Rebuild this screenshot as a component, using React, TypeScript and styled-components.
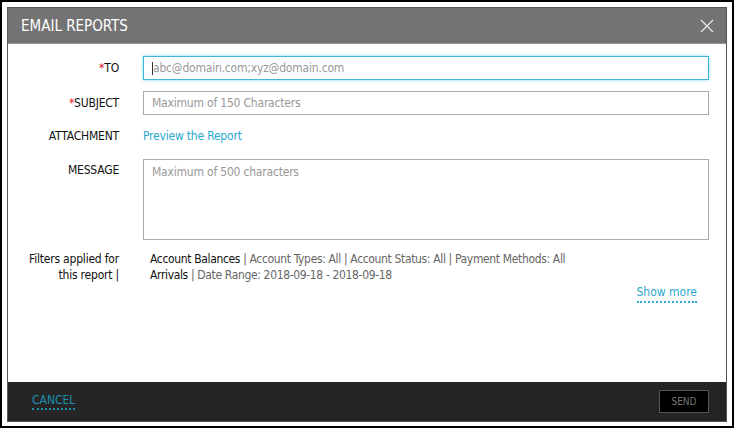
import React from 'react';
import styled, { createGlobalStyle } from 'styled-components';

const Global = createGlobalStyle`
  html, body { margin: 0; padding: 0; background: #fff; }
  body { font-family: "Liberation Sans Narrow", "DejaVu Sans Condensed", "Liberation Sans", sans-serif; }
`;

const Frame = styled.div`
  width: 734px;
  height: 428px;
  box-sizing: border-box;
  border: 2px solid #000;
  padding: 5px 5px 4px 5px;
  background: #fff;
`;

const Dialog = styled.div`
  height: 100%;
  display: flex;
  flex-direction: column;
  border: 1px solid #555;
  box-sizing: border-box;
`;

const Header = styled.div`
  height: 35px;
  background: #737373;
  display: flex;
  align-items: center;
  justify-content: space-between;
  padding: 0 12px 0 13px;
  color: #fff;
  font-size: 15px;
  border-bottom: 1px solid #999;
`;

const Body = styled.div`
  flex: 1;
  padding: 12px 17px 0 0;
  display: flex;
  flex-direction: column;
`;

const Row = styled.div<{ $top?: boolean; $mb: number }>`
  display: grid;
  grid-template-columns: 111px 1fr;
  column-gap: 24px;
  align-items: ${p => (p.$top ? 'start' : 'center')};
  margin-bottom: ${p => p.$mb}px;
`;

const Label = styled.div<{ $pad?: number }>`
  text-align: right;
  font-size: 12px;
  color: #111;
  padding-top: ${p => p.$pad ?? 0}px;
  line-height: 16px;
  letter-spacing: -0.2px;
`;

const Req = styled.span`
  color: #e0202a;
`;

const Input = styled.div<{ $focus?: boolean }>`
  height: 24px;
  box-sizing: border-box;
  border: 1px solid ${p => (p.$focus ? '#3fb6d6' : '#aaa')};
  box-shadow: ${p => (p.$focus ? '0 0 3px #7fd3ea' : 'none')};
  padding: 0 8px;
  display: flex;
  align-items: center;
  font-size: 12px;
  color: #999;
  letter-spacing: -0.2px;
`;

const Caret = styled.span`
  display: inline-block;
  width: 1px;
  height: 13px;
  background: #333;
`;

const TextArea = styled.div`
  height: 81px;
  box-sizing: border-box;
  border: 1px solid #aaa;
  padding: 5px 8px;
  font-size: 12px;
  color: #999;
  letter-spacing: -0.2px;
`;

const Link = styled.span`
  color: #2aa8d0;
  font-size: 12px;
  letter-spacing: -0.2px;
`;

const Filters = styled.div`
  font-size: 12px;
  line-height: 16px;
  color: #666;
  padding-left: 7px;
  letter-spacing: -0.35px;
`;

const Strong = styled.span`
  color: #111;
`;

const MoreRow = styled.div`
  display: flex;
  justify-content: flex-end;
  padding-right: 12px;
  margin-top: 2px;
`;

const Dotted = styled.span`
  color: #2aa8d0;
  font-size: 12px;
  border-bottom: 2px dotted #2aa8d0;
  padding-bottom: 2px;
`;

const Footer = styled.div`
  height: 39px;
  background: #252525;
  display: flex;
  align-items: center;
  justify-content: space-between;
  padding: 0 17px 0 24px;
`;

const Cancel = styled.span`
  color: #1f8fb0;
  font-size: 12px;
  border-bottom: 2px dotted #1f8fb0;
  padding-bottom: 1px;
`;

const Send = styled.div`
  width: 50px;
  height: 23px;
  box-sizing: border-box;
  background: #000;
  border: 1px solid #555;
  color: #777;
  font-size: 10px;
  display: flex;
  align-items: center;
  justify-content: center;
`;

export default function App() {
  return (
    <>
      <Global />
      <Frame>
        <Dialog>
          <Header>
            <span>EMAIL REPORTS</span>
            <svg width="14" height="14" viewBox="0 0 14 14">
              <path d="M1 1L13 13M13 1L1 13" stroke="#e8e8e8" strokeWidth="1.3" />
            </svg>
          </Header>
          <Body>
            <Row $mb={11}>
              <Label><Req>*</Req>TO</Label>
              <Input $focus><Caret />abc@domain.com;xyz@domain.com</Input>
            </Row>
            <Row $mb={13}>
              <Label><Req>*</Req>SUBJECT</Label>
              <Input>Maximum of 150 Characters</Input>
            </Row>
            <Row $mb={15}>
              <Label>ATTACHMENT</Label>
              <Link>Preview the Report</Link>
            </Row>
            <Row $top $mb={11}>
              <Label $pad={3}>MESSAGE</Label>
              <TextArea>Maximum of 500 characters</TextArea>
            </Row>
            <Row $top $mb={0}>
              <Label>Filters applied for<br />this report |</Label>
              <Filters>
                <div><Strong>Account Balances</Strong> | Account Types: All | Account Status: All | Payment Methods: All</div>
                <div><Strong>Arrivals</Strong> | Date Range: 2018-09-18 - 2018-09-18</div>
              </Filters>
            </Row>
            <MoreRow><Dotted>Show more</Dotted></MoreRow>
          </Body>
          <Footer>
            <Cancel>CANCEL</Cancel>
            <Send>SEND</Send>
          </Footer>
        </Dialog>
      </Frame>
    </>
  );
}
